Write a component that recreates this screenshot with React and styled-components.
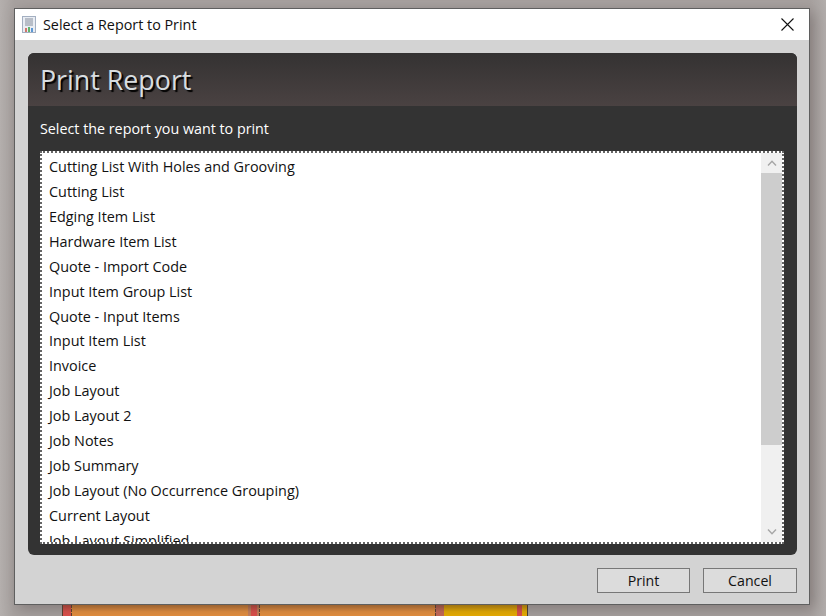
import React from 'react';
import styled, { createGlobalStyle } from 'styled-components';

const GlobalStyle = createGlobalStyle`
  html, body {
    margin: 0;
    padding: 0;
    height: 100%;
    overflow: hidden;
    background: #aaa5a3;
  }
  body {
    font-family: "Open Sans", "Noto Sans", sans-serif;
  }
`;

const Page = styled.div`
  width: 826px;
  height: 616px;
  padding: 8px 0 0 14px;
  box-sizing: border-box;
  overflow: hidden;
  background: linear-gradient(90deg, #b4afad 0, #a8a2a0 14px, #a8a2a0 810px, #b2adab 826px);
`;

const Window = styled.div`
  position: relative;
  z-index: 1;
  width: 796px;
  height: 597px;
  box-sizing: border-box;
  display: flex;
  flex-direction: column;
  border: 1px solid #5f5f5f;
  background: #d3d3d3;
  box-shadow: 4px 4px 14px rgba(60, 50, 50, 0.35);
`;

const TitleBar = styled.div`
  height: 31px;
  flex: none;
  display: flex;
  align-items: center;
  padding: 0 0 0 7px;
  background: #ffffff;
  color: #111;
  font-size: 14.35px;
`;

const TitleText = styled.span`
  margin-left: 7px;
  flex: 1;
`;

const CloseButton = styled.div`
  width: 44px;
  height: 31px;
  display: flex;
  align-items: center;
  justify-content: center;
`;

const Body = styled.div`
  flex: 1;
  display: flex;
  flex-direction: column;
  padding: 13px 12px 9px 13px;
`;

const Panel = styled.div`
  height: 502px;
  flex: none;
  display: flex;
  flex-direction: column;
  border-radius: 6px;
  overflow: hidden;
  background: #333333;
`;

const PanelHeader = styled.div`
  height: 53px;
  flex: none;
  display: flex;
  align-items: center;
  padding-left: 12px;
  background: linear-gradient(180deg, #343232 0%, #4a4242 100%);
`;

const Heading = styled.h1`
  margin: 0;
  font-size: 26.8px;
  font-weight: 400;
  color: #d8dde0;
  text-shadow: 2px 2px 1px #000;
`;

const Prompt = styled.div`
  height: 45px;
  flex: none;
  padding-left: 12px;
  line-height: 45px;
  font-size: 14.3px;
  color: #ffffff;
`;

const ListBox = styled.div`
  margin-left: 12px;
  width: 744px;
  height: 393px;
  box-sizing: border-box;
  display: flex;
  border: 2px dotted #666;
  background: #ffffff;
`;

const Rows = styled.div`
  flex: 1;
  overflow: hidden;
  padding-top: 2.25px;
`;

const Row = styled.div`
  height: 24.9px;
  line-height: 24.9px;
  padding-left: 7px;
  font-size: 14.4px;
  color: #111;
  white-space: nowrap;
`;

const Scrollbar = styled.div`
  width: 21px;
  flex: none;
  display: flex;
  flex-direction: column;
  background: #f0f0f0;
`;

const ScrollButton = styled.div`
  height: 20px;
  flex: none;
  display: flex;
  align-items: center;
  justify-content: center;
`;

const ScrollThumb = styled.div`
  height: 272px;
  flex: none;
  background: #cdcdcd;
`;

const ScrollTrack = styled.div`
  flex: 1;
`;

const Footer = styled.div`
  display: flex;
  justify-content: flex-end;
  gap: 13px;
  margin-top: 13px;
`;

const Button = styled.button`
  width: ${p => p.$w}px;
  height: 25px;
  padding: 0;
  border: 1px solid #777;
  border-radius: 0;
  background: #dcdcdc;
  color: #111;
  font-family: inherit;
  font-size: 14.2px;
`;

const Backdrop = styled.div`
  display: flex;
  height: 11px;
  margin-left: 48px;
`;

const Strip = styled.div`
  width: ${p => p.$w}px;
  flex: none;
  box-sizing: border-box;
  background: linear-gradient(180deg, rgba(90, 50, 20, 0.3) 0%, rgba(90, 50, 20, 0) 60%), ${p => p.$c};
  border-left: ${p => (p.$edge ? `1px ${p.$edge} #5a4030` : 'none')};
`;

const reports = [
  'Cutting List With Holes and Grooving',
  'Cutting List',
  'Edging Item List',
  'Hardware Item List',
  'Quote - Import Code',
  'Input Item Group List',
  'Quote - Input Items',
  'Input Item List',
  'Invoice',
  'Job Layout',
  'Job Layout 2',
  'Job Notes',
  'Job Summary',
  'Job Layout (No Occurrence Grouping)',
  'Current Layout',
  'Job Layout Simplified',
];

const strips = [
  { w: 9, c: '#e0504a', edge: 'solid' },
  { w: 177, c: '#e8913f', edge: 'dashed' },
  { w: 3, c: '#c8805c' },
  { w: 6, c: '#e0504a' },
  { w: 2, c: '#c8805c' },
  { w: 176, c: '#e8913f', edge: 'dashed' },
  { w: 9, c: '#c86a58', edge: 'dashed' },
  { w: 73, c: '#ecb000' },
  { w: 5, c: '#e0504a' },
  { w: 5, c: '#ecb000' },
  { w: 1, c: '#4a4038' },
];

function ReportIcon() {
  return (
    <svg width="14" height="17" viewBox="0 0 14 17">
      <rect x="0.5" y="0.5" width="13" height="16" fill="#e9edf3" stroke="#a3afc1" />
      <path d="M3 3h8M3 5h8M3 7h8M3 9h8" stroke="#868e9c" strokeWidth="1" />
      <rect x="3" y="12" width="2" height="4" fill="#d0756c" />
      <rect x="6" y="11" width="2" height="5" fill="#62b36c" />
      <rect x="9" y="12" width="2" height="4" fill="#5c98d4" />
    </svg>
  );
}

function App() {
  return (
    <Page>
      <GlobalStyle />
      <Window>
        <TitleBar>
          <ReportIcon />
          <TitleText>Select a Report to Print</TitleText>
          <CloseButton>
            <svg width="13" height="13" viewBox="0 0 13 13">
              <path d="M0.5 0.5L12.5 12.5M12.5 0.5L0.5 12.5" stroke="#111" strokeWidth="1.1" />
            </svg>
          </CloseButton>
        </TitleBar>
        <Body>
          <Panel>
            <PanelHeader>
              <Heading>Print Report</Heading>
            </PanelHeader>
            <Prompt>Select the report you want to print</Prompt>
            <ListBox>
              <Rows>
                {reports.map(name => (
                  <Row key={name}>{name}</Row>
                ))}
              </Rows>
              <Scrollbar>
                <ScrollButton>
                  <svg width="10" height="6" viewBox="0 0 10 6">
                    <path d="M1 5.5L5 1.2L9 5.5" fill="none" stroke="#a6a6a6" strokeWidth="1.4" />
                  </svg>
                </ScrollButton>
                <ScrollThumb />
                <ScrollTrack />
                <ScrollButton>
                  <svg width="10" height="6" viewBox="0 0 10 6">
                    <path d="M1 0.5L5 4.8L9 0.5" fill="none" stroke="#a6a6a6" strokeWidth="1.4" />
                  </svg>
                </ScrollButton>
              </Scrollbar>
            </ListBox>
          </Panel>
          <Footer>
            <Button $w={93}>Print</Button>
            <Button $w={94}>Cancel</Button>
          </Footer>
        </Body>
      </Window>
      <Backdrop>
        {strips.map((s, i) => (
          <Strip key={i} $w={s.w} $c={s.c} $edge={s.edge} />
        ))}
      </Backdrop>
    </Page>
  );
}

export default App;
